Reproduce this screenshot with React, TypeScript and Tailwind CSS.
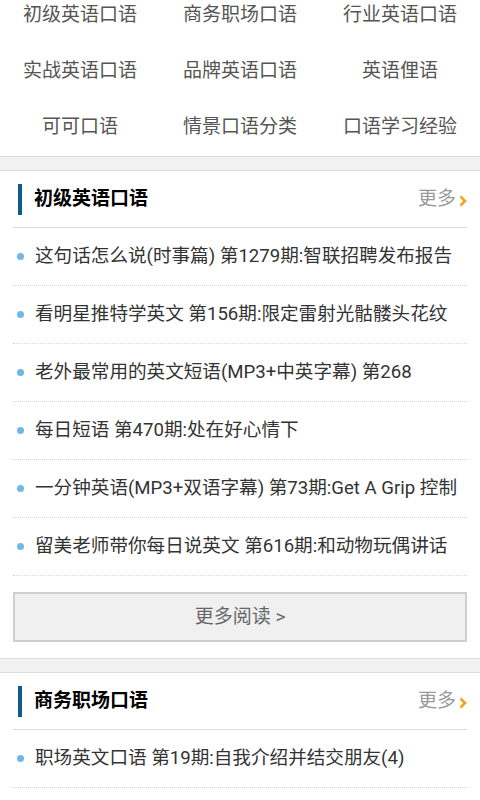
import React from "react";

const categories = [
  "初级英语口语",
  "商务职场口语",
  "行业英语口语",
  "实战英语口语",
  "品牌英语口语",
  "英语俚语",
  "可可口语",
  "情景口语分类",
  "口语学习经验",
];

const sections = [
  {
    title: "初级英语口语",
    items: [
      "这句话怎么说(时事篇) 第1279期:智联招聘发布报告",
      "看明星推特学英文 第156期:限定雷射光骷髅头花纹",
      "老外最常用的英文短语(MP3+中英字幕) 第268",
      "每日短语 第470期:处在好心情下",
      "一分钟英语(MP3+双语字幕) 第73期:Get A Grip 控制",
      "留美老师带你每日说英文 第616期:和动物玩偶讲话",
    ],
  },
  {
    title: "商务职场口语",
    items: ["职场英文口语 第19期:自我介绍并结交朋友(4)"],
  },
];

const font = { fontFamily: 'Roboto, "Noto Sans CJK SC", sans-serif' };

const Band = () => (
  <div className="h-[15px] bg-[#f2f2f2] border-y border-[#dcdcdc]" />
);

const App = () => {
  return (
    <div className="w-[480px] h-[800px] overflow-hidden bg-white" style={font}>
      {/* category grid */}
      <div className="grid grid-cols-3 -mt-[13px] pb-[1px]">
        {categories.map((c) => (
          <div
            key={c}
            className="h-14 flex items-center justify-center text-[19px] text-[#555]"
          >
            {c}
          </div>
        ))}
      </div>

      {sections.map((s, si) => (
        <div key={s.title}>
          <Band />
          <div className="px-[13px]">
            <div className="h-[57px] flex items-center justify-between border-b border-[#dcdcdc]">
              <div className="flex items-center">
                <span className="ml-[5px] w-[4px] h-[31px] bg-[#0c5a8e]" />
                <span className="ml-[12px] text-[19px] font-bold text-black">
                  {s.title}
                </span>
              </div>
              <div className="flex items-center">
                <span className="text-[19px] text-[#999]">更多</span>
                <svg width="8" height="12" viewBox="0 0 8 12" className="ml-[3px] mt-[3px]">
                  <path d="M1.5 1.5 L6 6 L1.5 10.5" fill="none" stroke="#f7a21b" strokeWidth="2.6" />
                </svg>
              </div>
            </div>
            {s.items.map((it) => (
              <div
                key={it}
                className="h-[58px] flex items-center border-b border-dotted border-[#d6d6d6] text-[18.6px] text-[#333] whitespace-nowrap overflow-hidden"
              >
                <span className="ml-[4px] w-[7px] h-[7px] rounded-full bg-[#6fb7e6] shrink-0" />
                <span className="ml-[11px]">{it}</span>
              </div>
            ))}
            {si === 0 && (
              <div className="py-4">
                <div className="h-[50px] flex items-center justify-center bg-[#f0f0f0] border-2 border-[#cfcfcf] text-[19px] text-[#666]">
                  更多阅读 &gt;
                </div>
              </div>
            )}
          </div>
        </div>
      ))}
    </div>
  );
};

export default App;
